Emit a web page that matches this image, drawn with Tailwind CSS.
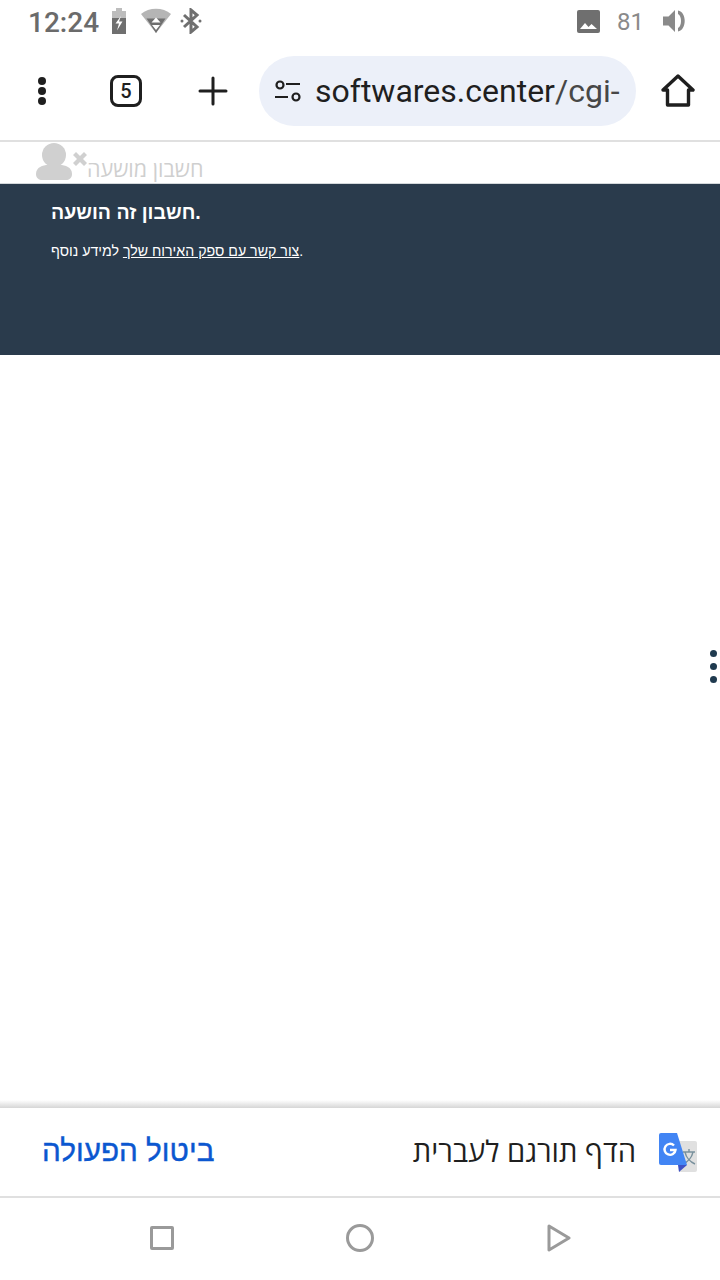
<!DOCTYPE html>
<html lang="he">
<head>
    <meta charset="UTF-8">
    <meta name="viewport" content="width=device-width, initial-scale=1.0">
    <title>חשבון מושעה</title>
    <script src="https://cdn.jsdelivr.net/npm/@tailwindcss/browser@4"></script>
</head>
<body class="bg-white font-['Roboto','Liberation_Sans',sans-serif]">
<div class="relative w-[720px] h-[1280px] flex flex-col overflow-hidden" dir="ltr">

    <!-- status bar -->
    <div class="h-[44px] flex items-center justify-between pl-[28px] pr-[33px] text-[#757575]">
        <div class="flex items-center">
            <span class="text-[28px] leading-none font-medium text-[#6b6b6b] mt-[1px]">12:24</span>
            <svg class="ml-[12px] -mt-[3px]" width="16" height="26" viewBox="0 0 16 26"><path d="M5 0h6v3h4v23H1V3h4z" fill="#6f6f6f" /><path d="M1 3h14v7H1zM5 0h6v3H5z" fill="#bdbdbd" /><path d="M10 8 4.500 15.500h3.500L6 22.500l5.500-9h-3.500z" fill="#fff" /></svg>
            <svg class="ml-[13px] -mt-[3px]" width="32" height="26" viewBox="0 0 32 26"><path d="M1 6C9-1 23-1 31 6L16 25z" fill="#b5b5b5" /><path d="M6.500 10.500h19L16 25z" fill="#6f6f6f" /><path d="M16 9.500l4.500 5h-9zM16 22l-4-5h8z" fill="#fff" /></svg>
            <svg class="ml-[8px] -mt-[3px]" width="22" height="26" viewBox="0 0 22 26" fill="none" stroke="#6f6f6f" stroke-width="3"><path d="M4 7l13 12-6 5V2l6 5L4 19" /><circle cx="2" cy="13" r="1.500" fill="#6f6f6f" stroke="none" /><circle cx="20" cy="13" r="1.500" fill="#6f6f6f" stroke="none" /></svg>
        </div>
        <div class="flex items-center">
            <svg class="-mt-[2px]" width="23" height="23" viewBox="0 0 23 23"><rect width="23" height="23" rx="2" fill="#6f6f6f" /><path d="M3 19l5-6 3.500 4 3-3 5.500 5z" fill="#fff" /></svg>
            <span class="ml-[17px] text-[24px] leading-none text-[#8a8a8a]">81</span>
            <svg class="ml-[19px] -mt-[2px]" width="24" height="24" viewBox="0 0 24 24"><path d="M0 7.500h5.500L12 1v22l-6.500-6.500H0z" fill="#8a8a8a" /><path d="M15 1.500c9 1.500 9 19.500 0 21v-3.500c4-2 4-12 0-14z" fill="#8a8a8a" /></svg>
        </div>
    </div>

    <!-- browser toolbar -->
    <div class="h-[96px] flex items-center relative pb-[2px]">
        <div class="w-[84px] flex justify-center">
            <div class="flex flex-col gap-[2px]">
                <span class="w-[8px] h-[8px] rounded-full bg-[#1f1f1f]"></span>
                <span class="w-[8px] h-[8px] rounded-full bg-[#1f1f1f]"></span>
                <span class="w-[8px] h-[8px] rounded-full bg-[#1f1f1f]"></span>
            </div>
        </div>
        <div class="w-[32px] h-[32px] ml-[26px] rounded-[8px] border-[3px] border-[#1f1f1f] flex items-center justify-center text-[20px] leading-none font-medium text-[#1f1f1f]">5</div>
        <svg class="ml-[56px]" width="30" height="30" viewBox="0 0 30 30" fill="none" stroke="#1f1f1f" stroke-width="3" stroke-linecap="round"><path d="M15 2v26M2 15h26" /></svg>
        <div class="ml-[31px] w-[377px] h-[70px] rounded-full bg-[#ecf0f9] flex items-center pl-[15px]">
            <svg class="shrink-0" width="27" height="24" viewBox="0 0 27 24" fill="none" stroke="#1f1f1f" stroke-width="2.200"><circle cx="6" cy="6" r="3.500" /><path d="M12 5h14M1 18h13" /><circle cx="22" cy="18" r="3.500" /></svg>
            <span class="ml-[14px] whitespace-nowrap text-[32px] leading-none text-[#1f1f1f]">softwares.center<span class="text-[#474747]">/cgi-</span></span>
        </div>
        <svg class="ml-[25px]" width="34" height="34" viewBox="0 0 34 34" fill="none" stroke="#1f1f1f" stroke-width="3.400" stroke-linejoin="round"><path d="M2 16 17 2l15 14h-4.500v15h-21V16z" /></svg>
    </div>
    <div class="h-[2px] bg-[#e0e0e0]"></div>

    <!-- page header -->
    <div class="h-[42px] flex items-start pl-[36px] border-b border-[#d4d8db] relative">
        <svg class="mt-[1px]" width="52" height="37" viewBox="0 0 52 37" fill="#d0d0d0"><circle cx="18" cy="12" r="12" /><path d="M0 31c0-7 7-9 12-9h12c5 0 12 2 12 9 0 4-3 6-6 6H6c-3 0-6-2-6-6z" /><path d="M37 12l3-3 4 4 4-4 3 3-4 4 4 4-3 3-4-4-4 4-3-3 4-4z" /></svg>
        <span class="text-[21.500px] leading-none mt-[16px] -ml-[1px] text-[#cfcfcf] font-['Open_Sans','Liberation_Sans',sans-serif]">חשבון מושעה</span>
    </div>

    <!-- suspended notice -->
    <div class="h-[171px] bg-[#2a3b4c] pl-[51px] pt-[18px] text-white font-['Liberation_Sans',sans-serif]">
        <p class="text-[19.500px] leading-[20px] font-bold">חשבון זה הושעה.</p>
        <p class="mt-[19px] text-[14.200px] leading-[20px]"><u>צור קשר עם ספק האירוח שלך</u> למידע נוסף.</p>
    </div>

    <div class="flex-1 relative">
        <div class="absolute right-[3px] top-[295px] flex flex-col gap-[6px]">
            <span class="w-[7px] h-[7px] rounded-full bg-[#1f3a4f]"></span>
            <span class="w-[7px] h-[7px] rounded-full bg-[#1f3a4f]"></span>
            <span class="w-[7px] h-[7px] rounded-full bg-[#1f3a4f]"></span>
        </div>
        <div class="absolute left-0 right-0 bottom-0 h-[8px] bg-gradient-to-b from-transparent to-[#d6d6d6]"></div>
    </div>

    <!-- translate bar -->
    <div class="h-[88px] flex items-center justify-between pl-[42px] pr-[23px]">
        <span class="text-[29.700px] leading-none text-[#0b57d0] font-['Liberation_Sans',sans-serif] -mt-[3px] [-webkit-text-stroke:0.4px_#0b57d0]">ביטול הפעולה</span>
        <div class="flex items-center">
            <span class="text-[29.200px] leading-none text-[#1f1f1f] font-['Open_Sans','Liberation_Sans',sans-serif]">הדף תורגם לעברית</span>
            <svg class="ml-[23px]" width="38" height="39" viewBox="0 0 38 39"><path d="M18 8h18a2 2 0 0 1 2 2v27a2 2 0 0 1-2 2H20z" fill="#e0e0e0" /><path d="M30 16v3M24 19h12M26 19c1 5 5 10 10 12M34 19c-1 5-5 10-10 12" fill="none" stroke="#78909c" stroke-width="1.400" /><path d="M2 0h16l10 32H2a2 2 0 0 1-2-2V2a2 2 0 0 1 2-2z" fill="#4285f4" /><path d="M19 32h9l-8 7z" fill="#3f51c5" /><path d="M15 12.500A5.500 5.500 0 1 0 16.500 17H11" fill="none" stroke="#fff" stroke-width="2.400" /></svg>
        </div>
    </div>
    <div class="h-[2px] bg-[#e0e0e0]"></div>

    <!-- nav bar -->
    <div class="h-[82px] relative flex items-center pb-[3px]">
        <div class="ml-[150px] w-[24px] h-[24px] border-[3px] border-[#9a9a9a] rounded-[2px]"></div>
        <div class="ml-[172px] w-[28px] h-[28px] border-[3px] border-[#9a9a9a] rounded-full"></div>
        <svg class="ml-[172px]" width="26" height="28" viewBox="0 0 26 28" fill="none" stroke="#9a9a9a" stroke-width="3" stroke-linejoin="round"><path d="M3 2l20 12L3 26z" /></svg>
    </div>
</div>
</body>
</html>
